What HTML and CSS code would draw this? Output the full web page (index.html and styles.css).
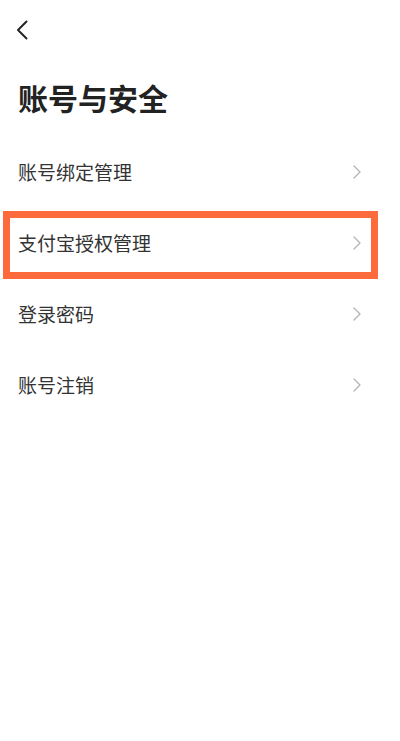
FILE: index.html
```html
<!DOCTYPE html>
<html lang="zh-CN">
<head>
<meta charset="utf-8">
<title>账号与安全</title>
<link rel="stylesheet" href="styles.css">
</head>
<body>
<div class="page">
  <header class="topbar">
    <svg class="back" width="12" height="20" viewBox="0 0 12 20"><polyline points="10.5,1.5 2,10 10.5,18.5" fill="none" stroke="#222" stroke-width="1.9" stroke-linecap="round" stroke-linejoin="round"/></svg>
  </header>
  <h1 class="title">账号与安全</h1>
  <ul class="list">
    <li class="row"><span class="label">账号绑定管理</span><svg class="arrow" width="8" height="14" viewBox="0 0 8 14"><polyline points="1,1 7,7 1,13" fill="none" stroke="#b3b3b3" stroke-width="1.3" stroke-linecap="round" stroke-linejoin="round"/></svg></li>
    <li class="row highlighted"><span class="label">支付宝授权管理</span><svg class="arrow" width="8" height="14" viewBox="0 0 8 14"><polyline points="1,1 7,7 1,13" fill="none" stroke="#b3b3b3" stroke-width="1.3" stroke-linecap="round" stroke-linejoin="round"/></svg><span class="mark"></span></li>
    <li class="row"><span class="label">登录密码</span><svg class="arrow" width="8" height="14" viewBox="0 0 8 14"><polyline points="1,1 7,7 1,13" fill="none" stroke="#b3b3b3" stroke-width="1.3" stroke-linecap="round" stroke-linejoin="round"/></svg></li>
    <li class="row"><span class="label">账号注销</span><svg class="arrow" width="8" height="14" viewBox="0 0 8 14"><polyline points="1,1 7,7 1,13" fill="none" stroke="#b3b3b3" stroke-width="1.3" stroke-linecap="round" stroke-linejoin="round"/></svg></li>
  </ul>
</div>
</body>
</html>
```

FILE: styles.css
```css
html, body {
  margin: 0;
  padding: 0;
  background: #ffffff;
}
body {
  font-family: "Noto Sans CJK SC", "Noto Sans", sans-serif;
  color: #222;
}
.page {
  width: 400px;
  min-height: 741px;
  background: #fff;
}
.topbar {
  height: 60px;
  display: flex;
  align-items: center;
  padding-left: 16px;
}
.back {
  display: block;
}
.title {
  margin: 0;
  padding: 17px 18px 0;
  font-size: 30px;
  line-height: 40px;
  font-weight: 700;
  color: #222;
}
.list {
  list-style: none;
  margin: 19px 0 0;
  padding: 0;
}
.row {
  position: relative;
  height: 71px;
  display: flex;
  align-items: center;
  justify-content: space-between;
  padding: 0 39px 0 18px;
}
.label {
  font-size: 19px;
  line-height: 24px;
  color: #333;
}
.arrow {
  display: block;
}
.mark {
  position: absolute;
  left: 3px;
  top: 4px;
  width: 361px;
  height: 54px;
  border: 7px solid #fd6b3c;
  pointer-events: none;
}
```
